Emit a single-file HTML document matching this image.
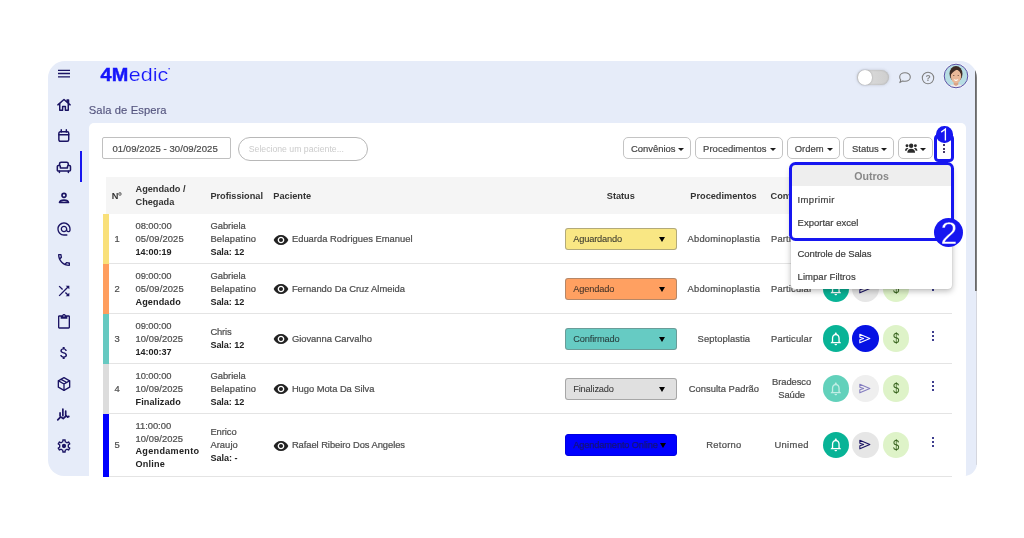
<!DOCTYPE html>
<html lang="pt-br">
<head>
<meta charset="utf-8">
<title>Sala de Espera</title>
<style>
*{box-sizing:border-box;margin:0;padding:0}
html,body{width:1024px;height:538px;overflow:hidden;background:#fff}
#root{position:absolute;left:0;top:0;width:1024px;height:538px;will-change:transform}
body{font-family:"Liberation Sans",sans-serif;font-size:9.4px;color:#4e4e4e;position:relative}
.abs{position:absolute}
.frame{position:absolute;left:48px;top:60.6px;width:928.5px;height:415.7px;background:#e6ecf9;border-radius:17px 17px 13px 16px;overflow:hidden}
.fin{position:absolute;left:0;top:.4px;width:100%;height:100%}
.panel{position:absolute;left:41px;top:62.3px;width:877px;height:380px;background:#fff;border-radius:5px 5px 0 0}
.sb{position:absolute}
.sb svg{display:block;width:100%;height:100%;fill:#1b1464}
.ind{position:absolute;left:32.2px;top:90px;width:2.2px;height:31px;background:#1616f0}
.title{position:absolute;left:40.8px;top:43px;font-size:11.2px;color:#55557f;line-height:13px;white-space:nowrap;letter-spacing:.1px;-webkit-text-stroke:.15px #55557f}
.scroll{position:absolute;left:927.4px;top:9.5px;width:1.4px;height:220.5px;background:linear-gradient(90deg,#5e5e5e,#8a8a8a)}
.scroll2{position:absolute;left:927.7px;top:230px;width:0.8px;height:174px;background:#d4d6de}
.inp{position:absolute;border:1px solid #c0c0c0;background:#fff;white-space:nowrap}
.btn{position:absolute;top:137px;height:22px;border:1px solid #c4c4c4;border-radius:5px;background:#fff;color:#454545;font-size:9.45px;line-height:21.2px;white-space:nowrap;-webkit-text-stroke:.2px #454545}
.btn span{position:absolute;top:0}
.caret{position:absolute;top:9.5px;width:0;height:0;border-left:3.05px solid transparent;border-right:3.05px solid transparent;border-top:3.1px solid #1c1c1c}
.thead{position:absolute;left:106.4px;top:177px;width:845.4px;height:36.6px;background:#f5f5f5}
.th{position:absolute;font-weight:700;color:#333;font-size:9.2px;line-height:13px;white-space:nowrap}
.row{position:absolute;left:103px;width:848.8px;border-bottom:1px solid #e4e4e4}
.strip{position:absolute;left:0;top:0;bottom:-1px;width:6.3px}
.c{position:absolute;line-height:13px;white-space:nowrap;color:#4e4e4e;-webkit-text-stroke:.22px #4e4e4e}
.c b{color:#222;font-size:9.1px;line-height:1;-webkit-text-stroke:0}
.sel{position:absolute;left:461.6px;width:112.6px;height:22.2px;border:1px solid rgba(110,110,110,.5);border-radius:3px;font-size:9.25px;line-height:20.6px;color:#3a3a3a;padding-left:7.6px;white-space:nowrap;letter-spacing:-0.15px}
.sel i{position:absolute;right:11px;top:8.2px;width:0;height:0;border-left:3.1px solid transparent;border-right:3.1px solid transparent;border-top:5.2px solid #000}
.rb{position:absolute;width:26.6px;height:26.6px;border-radius:50%}
.rb svg{position:absolute}
.kb{position:absolute;width:2.1px;height:2.1px;background:#1a1a7a;border-radius:35%}
.eye{position:absolute;left:170.3px;width:16px;height:16px;fill:#222}
.menu{position:absolute;left:791.3px;top:165.5px;width:160.6px;height:123.3px;background:#fff;border-radius:4px;box-shadow:0 2px 6px rgba(0,0,0,.28),0 0 1px rgba(0,0,0,.25);overflow:hidden}
.menu .hd{position:absolute;left:0;top:0;width:100%;height:20.6px;background:#eee;text-align:center;font-weight:700;font-size:10.6px;line-height:20.4px;color:#888}
.menu .it{position:absolute;left:6.3px;line-height:13px;color:#404040;font-size:9.5px;white-space:nowrap;-webkit-text-stroke:.2px #404040}
.hl{position:absolute;border:3.5px solid #1616f0}
.num{position:absolute;background:#1616f0;border-radius:50%;color:#fff;text-align:center}
</style>
</head>
<body>
<div id="root">
<div class="frame"><div class="fin">
<div class="ind"></div>
<div class="title">Sala de Espera</div>
<div class="panel"></div>
<div class="scroll"></div><div class="scroll2"></div>
<div class="sb" style="left:7.75px;top:5.00px;width:16px;height:16px"><svg viewBox="0 0 24 24"><path d="M3 5.600h18v1.900H3zM3 10.300h18v1.900H3zM3 15.300h18v1.900H3z"/></svg></div>
<div class="sb" style="left:7.75px;top:36.00px;width:16px;height:16px"><svg viewBox="0 0 24 24"><g fill="none" stroke="#1b1464" stroke-width="2.200" stroke-linejoin="round" stroke-linecap="round"><path d="M2.800 11.800 12 3.800l9.200 8"/><path d="M5.600 10.200v9.600h4.300v-5.400h4.200v5.400h4.300v-9.600"/><path d="M16.600 6.600V4.300h2.200v4.300"/></g></svg></div>
<div class="sb" style="left:8.95px;top:68.20px;width:13.6px;height:13.6px"><svg viewBox="0 0 24 24"><g fill="none" stroke="#1b1464" stroke-width="2.6"><rect x="3.300" y="4.800" width="17.400" height="16.900" rx="2.600"/><path d="M3.300 10.200h17.400M7.500 1.500v4M16.500 1.500v4" stroke-linecap="round"/></g></svg></div>
<div class="sb" style="left:7.85px;top:98.10px;width:15.8px;height:15.8px"><svg viewBox="0 0 24 24"><g fill="none" stroke="#1b1464" stroke-width="2.300" stroke-linejoin="round" stroke-linecap="round"><path d="M5.400 9.600V7.400c0-1.400 1-2.400 2.400-2.400h8.400c1.400 0 2.400 1 2.400 2.400v2.200"/><path d="M3.600 9.800h1.400c1 0 1.600.7 1.600 1.600v2.400h10.800v-2.400c0-.9.6-1.600 1.600-1.600h1.400c1 0 1.600.7 1.600 1.600v5.200c0 .9-.6 1.600-1.600 1.600H3.600c-1 0-1.600-.7-1.600-1.600v-5.200c0-.9.6-1.600 1.600-1.600z"/><path d="M5.200 18.600v1.800M18.800 18.600v1.800"/></g></svg></div>
<div class="sb" style="left:7.75px;top:129.00px;width:16px;height:16px"><svg viewBox="0 0 24 24"><g fill="none" stroke="#1b1464" stroke-width="2.500"><circle cx="12" cy="8" r="3"/><path d="M5.300 18.800c.4-2 3.300-3.500 6.700-3.500s6.300 1.500 6.700 3.500z" stroke-linejoin="round"/></g></svg></div>
<div class="sb" style="left:7.75px;top:160.00px;width:16px;height:16px"><svg viewBox="0 0 24 24"><path d="M12 2C6.480 2 2 6.480 2 12s4.480 10 10 10h5v-2h-5c-4.340 0-8-3.660-8-8s3.660-8 8-8 8 3.660 8 8v1.430c0 .79-.71 1.570-1.500 1.570s-1.500-.78-1.500-1.570V12c0-2.760-2.240-5-5-5s-5 2.240-5 5 2.240 5 5 5c1.380 0 2.640-.56 3.540-1.470.65.89 1.770 1.470 2.960 1.470 1.970 0 3.500-1.600 3.500-3.570V12c0-5.520-4.480-10-10-10zm0 13c-1.660 0-3-1.340-3-3s1.340-3 3-3 3 1.340 3 3-1.340 3-3 3z"/></svg></div>
<div class="sb" style="left:7.75px;top:191.00px;width:16px;height:16px"><svg viewBox="0 0 24 24"><path d="M6.540 5c.06.89.21 1.760.45 2.590l-1.200 1.200c-.41-1.200-.67-2.470-.76-3.790h1.510m9.860 12.020c.85.24 1.720.39 2.600.45v1.490c-1.320-.09-2.590-.35-3.800-.75l1.200-1.190M7.500 3H4c-.55 0-1 .45-1 1 0 9.390 7.610 17 17 17 .55 0 1-.45 1-1v-3.490c0-.55-.45-1-1-1-1.240 0-2.450-.2-3.570-.57-.1-.04-.21-.05-.31-.05-.26 0-.51.1-.71.29l-2.200 2.200c-2.830-1.450-5.150-3.760-6.590-6.590l2.200-2.200c.28-.28.36-.67.25-1.020C8.700 6.450 8.500 5.250 8.500 4c0-.55-.45-1-1-1z"/></svg></div>
<div class="sb" style="left:7.75px;top:222.00px;width:16px;height:16px"><svg viewBox="0 0 24 24"><path d="M10.590 9.170L5.410 4 4 5.410l5.170 5.170 1.420-1.410zM14.500 4l2.040 2.040L4 18.590 5.410 20 17.960 7.460 20 9.500V4h-5.500zm.33 9.410l-1.410 1.410 3.130 3.130L14.500 20H20v-5.500l-2.040 2.040-3.130-3.130z"/></svg></div>
<div class="sb" style="left:7.75px;top:253.00px;width:16px;height:16px"><svg viewBox="0 0 24 24"><path d="M19 2h-4.180C14.400.84 13.300 0 12 0S9.600.84 9.180 2H5c-1.100 0-2 .9-2 2v16c0 1.100.9 2 2 2h14c1.100 0 2-.9 2-2V4c0-1.100-.9-2-2-2zm-7 0c.55 0 1 .45 1 1s-.45 1-1 1-1-.45-1-1 .45-1 1-1zm7 18H5V4h2v3h10V4h2v16z"/></svg></div>
<div class="sb" style="left:7.75px;top:284.00px;width:16px;height:16px"><svg viewBox="0 0 24 24"><path d="M11.800 10.900c-2.270-.59-3-1.200-3-2.150 0-1.090 1.010-1.850 2.700-1.850 1.780 0 2.440.85 2.500 2.100h2.210c-.07-1.720-1.120-3.300-3.210-3.810V3h-3v2.160c-1.940.42-3.500 1.680-3.500 3.610 0 2.310 1.910 3.460 4.700 4.130 2.500.6 3 1.480 3 2.410 0 .69-.49 1.790-2.700 1.790-2.060 0-2.870-.92-2.980-2.100h-2.200c.12 2.190 1.760 3.420 3.680 3.830V21h3v-2.150c1.950-.37 3.500-1.500 3.500-3.550 0-2.840-2.430-3.810-4.700-4.400z"/></svg></div>
<div class="sb" style="left:7.75px;top:315.00px;width:16px;height:16px"><svg viewBox="0 0 24 24"><g fill="none" stroke="#1b1464" stroke-width="2" stroke-linejoin="round" stroke-linecap="round"><path d="M12 2.500 20.500 7.200v9.600L12 21.500 3.500 16.800V7.200z"/><path d="M3.800 7.400 12 12l8.200-4.600M12 12v9.300M7.600 5 16.200 9.700"/></g></svg></div>
<div class="sb" style="left:8.25px;top:346.50px;width:15px;height:15px"><svg viewBox="0 0 24 24"><g fill="none" stroke="#1b1464" stroke-width="2.700" stroke-linecap="round" stroke-linejoin="round"><path d="M6.500 9.500v5M11 3.500v10.500M15.500 6.500v6.500M2.800 20.500l4.700-4.700 4 2.700 5-4.500 2.200 2.300"/><circle cx="20.300" cy="15.300" r="1.600" fill="#1b1464" stroke="none"/></g></svg></div>
<div class="sb" style="left:7.75px;top:377.00px;width:16px;height:16px"><svg viewBox="0 0 24 24"><path d="M19.430 12.980c.04-.32.07-.64.07-.98 0-.34-.03-.66-.07-.98l2.110-1.650c.19-.15.24-.42.12-.64l-2-3.460c-.09-.16-.26-.25-.44-.25-.06 0-.12.010-.17.030l-2.490 1c-.52-.4-1.080-.73-1.690-.98l-.38-2.650C14.460 2.180 14.250 2 14 2h-4c-.25 0-.46.18-.49.42l-.38 2.650c-.61.25-1.170.59-1.690.98l-2.490-1c-.06-.02-.12-.03-.18-.03-.17 0-.34.09-.43.25l-2 3.460c-.13.22-.07.49.12.64l2.110 1.650c-.04.32-.07.65-.07.980 0 .33.03.66.07.98l-2.110 1.650c-.19.15-.24.42-.12.64l2 3.460c.09.16.26.25.44.25.06 0 .12-.010.17-.030l2.490-1c.52.4 1.080.73 1.690.98l.38 2.650c.03.24.24.42.49.42h4c.25 0 .46-.18.490-.42l.38-2.650c.61-.25 1.170-.59 1.690-.98l2.490 1c.06.02.12.03.18.03.17 0 .34-.09.43-.25l2-3.460c.12-.22.07-.49-.12-.64l-2.110-1.650zm-1.980-1.710c.04.31.05.52.05.73 0 .21-.02.43-.05.73l-.14 1.130.89.7 1.080.84-.7 1.210-1.270-.51-1.040-.42-.9.68c-.43.32-.84.56-1.250.73l-1.060.43-.16 1.130-.2 1.350h-1.400l-.19-1.350-.16-1.130-1.060-.43c-.43-.18-.83-.41-1.230-.71l-.91-.7-1.060.43-1.270.51-.7-1.210 1.080-.84.89-.7-.14-1.130c-.03-.31-.05-.54-.05-.74s.02-.43.05-.73l.14-1.130-.89-.7-1.080-.84.7-1.210 1.270.51 1.040.42.9-.68c.43-.32.84-.56 1.250-.73l1.060-.43.16-1.130.2-1.350h1.390l.19 1.350.16 1.130 1.060.43c.43.18.83.41 1.230.71l.91.7 1.060-.43 1.270-.51.7 1.210-1.070.85-.89.7.14 1.130z"/><circle cx="12" cy="12" r="3.200"/></svg></div>
<svg class="abs" style="left:52px;top:4px;width:74px;height:20px" viewBox="0 0 74 20"><g fill="#1616fa" font-family="Liberation Sans, sans-serif" font-size="17.900"><text x=".6" y="16.100" font-weight="700" textLength="27.600" lengthAdjust="spacingAndGlyphs" stroke="#1616fa" stroke-width=".45">4M</text><text x="28.800" y="16.100" textLength="39.400" lengthAdjust="spacingAndGlyphs" stroke="#e6ecf9" stroke-width=".18">edic</text><circle cx="69.100" cy="3.700" r=".75"/></g></svg>
<div class="abs" style="left:809.2px;top:8.600px;width:31.600px;height:15.600px;border-radius:8px;background:linear-gradient(90deg,#e0e0e0,#cecece);box-shadow:inset 0 0 2px rgba(0,0,0,.22),0 0 3px rgba(120,120,130,.35)"><div class="abs" style="left:.6px;top:.6px;width:14.400px;height:14.400px;border-radius:50%;background:#fff;box-shadow:0 0 2px rgba(0,0,0,.3)"></div></div>
<svg class="abs" style="left:850px;top:10px;width:14px;height:14px" viewBox="0 0 14 14"><path d="M7 1.700c3 0 5.300 1.900 5.300 4.300S10 10.300 7 10.300c-.8 0-1.500-.1-2.200-.4L1.800 11.600l1-2.600C2.100 8.200 1.700 7.200 1.700 6c0-2.400 2.300-4.300 5.300-4.300z" fill="none" stroke="#7c7c7c" stroke-width="1.050" stroke-linejoin="round"/></svg>
<svg class="abs" style="left:873.3px;top:9.800px;width:14px;height:14px" viewBox="0 0 14 14"><circle cx="7" cy="7" r="5.700" fill="none" stroke="#808080" stroke-width="1.050"/><text x="7" y="10" font-family="Liberation Sans, sans-serif" font-size="8.500" font-weight="700" text-anchor="middle" fill="#858585">?</text></svg>
<svg class="abs" style="left:894.5px;top:1.900px;width:26px;height:26px" viewBox="0 0 26 26"><defs><clipPath id="av"><circle cx="13" cy="13" r="11.400"/></clipPath></defs><circle cx="13" cy="13" r="12.700" fill="#fff" opacity=".8"/><circle cx="13" cy="13" r="11.800" fill="#b7dde3"/><g clip-path="url(#av)"><ellipse cx="13" cy="10.800" rx="6.500" ry="7.900" fill="#3d2b25"/><rect x="10.700" y="17.500" width="4.600" height="6" fill="#d9a386"/><path d="M3.500 26c.5-3 3-4.300 6.800-4.600l2.700 1.500 2.700-1.500c3.800.3 6.300 1.600 6.800 4.600z" fill="#efe9ea"/><ellipse cx="13" cy="13.300" rx="5.150" ry="6.900" fill="#e9b899"/><path d="M7.500 12C7.300 6.600 9.800 4.300 13.200 4.300c3.200 0 5.500 2.200 5.400 7.200-1.100-2.600-2.700-4.100-4.900-4.700-1.900 1-4.400 2.500-6.200 5.200z" fill="#3d2b25"/><circle cx="10.800" cy="12.500" r=".6" fill="#5a3d31"/><circle cx="15.200" cy="12.500" r=".6" fill="#5a3d31"/><path d="M10.600 15.900q2.400 1.500 4.800 0-.8 2.100-2.400 2.100t-2.400-2.100z" fill="#fff"/></g><circle cx="13" cy="13" r="11.800" fill="none" stroke="#5b50a6" stroke-width="1"/></svg>
</div></div>
<div class="inp" style="left:102.3px;top:137.3px;width:129.2px;height:21.7px;border-radius:2px;font-size:9.55px;line-height:21.3px;color:#4a4a4a;padding-left:9.1px;letter-spacing:.06px;-webkit-text-stroke:.2px #4a4a4a">01/09/2025 - 30/09/2025</div>
<div class="inp" style="left:238px;top:136.8px;width:130px;height:24px;border-radius:12px;font-size:8.7px;line-height:22px;color:#cbcbcb;padding-left:9.8px;border-color:#b8b8b8">Selecione um paciente...</div>
<div class="btn" style="left:622.9px;width:68.3px"><span style="left:7.0px;letter-spacing:0px">Convênios</span><i class="caret" style="left:54.0px"></i></div>
<div class="btn" style="left:694.7px;width:88.3px"><span style="left:7.4px;letter-spacing:0.04px">Procedimentos</span><i class="caret" style="left:74.0px"></i></div>
<div class="btn" style="left:786.6px;width:53.3px"><span style="left:7.2px;letter-spacing:0px">Ordem</span><i class="caret" style="left:39.2px"></i></div>
<div class="btn" style="left:843.2px;width:51.2px"><span style="left:7.8px;letter-spacing:0px">Status</span><i class="caret" style="left:36.5px"></i></div>
<div class="btn" style="left:897.9px;width:35.2px"><svg class="abs" style="left:6.400px;top:4.800px;width:12.400px;height:10px" viewBox="0 0 24.800 20"><g fill="#2b2b2b"><circle cx="12.400" cy="5.400" r="4.400"/><path d="M4.600 19.600c0-5 3.200-8 7.800-8s7.800 3 7.800 8z"/><circle cx="4" cy="5.600" r="2.900"/><circle cx="20.800" cy="5.600" r="2.900"/><path d="M0 15.600c0-3.600 1.600-5.800 4.400-5.800 1 0 1.900.3 2.600.8-2 1.300-3.300 3.100-3.600 5z"/><path d="M24.800 15.600c0-3.600-1.600-5.800-4.400-5.800-1 0-1.900.3-2.600.8 2 1.300 3.300 3.100 3.600 5z"/></g></svg><i class="caret" style="left:21px"></i></div>
<div class="kb" style="left:943.3px;top:143.8px;background:#24124a"></div>
<div class="kb" style="left:943.3px;top:147.5px;background:#24124a"></div>
<div class="kb" style="left:943.3px;top:151.3px;background:#24124a"></div>
<div class="thead"></div>
<div class="th" style="left:111.7px;top:189.6px;">Nº</div>
<div class="th" style="left:135.5px;top:182.7px;">Agendado /</div>
<div class="th" style="left:135.5px;top:195.7px;">Chegada</div>
<div class="th" style="left:210.4px;top:189.6px;">Profissional</div>
<div class="th" style="left:273.3px;top:189.6px;">Paciente</div>
<div class="th" style="left:570.8px;top:189.6px;width:100px;text-align:center">Status</div>
<div class="th" style="left:673.5px;top:189.6px;width:100px;text-align:center">Procedimentos</div>
<div class="th" style="left:770.5px;top:189.6px;">Convênio</div>
<div class="row" style="top:214.0px;height:49.6px"><div class="strip" style="background:#f9e07a"></div><div class="c" style="left:4.2px;top:17.9px;width:20px;text-align:center">1</div><div class="c" style="left:32.5px;top:4.9px;"><span style="letter-spacing:-0.056px">08:00:00</span><br><span style="letter-spacing:0.139px">05/09/2025</span><br><b style="letter-spacing:-0.061px">14:00:19</b></div><div class="c" style="left:107.4px;top:4.9px;"><span style="letter-spacing:-0.004px">Gabriela</span><br><span style="letter-spacing:0.153px">Belapatino</span><br><b style="letter-spacing:-0.072px">Sala: 12</b></div><svg class="eye" style="top:17.6px" viewBox="0 0 24 24"><path d="M12 4.500C7 4.500 2.730 7.610 1 12c1.730 4.390 6 7.500 11 7.500s9.270-3.110 11-7.500c-1.730-4.390-6-7.500-11-7.500zM12 17c-2.760 0-5-2.240-5-5s2.240-5 5-5 5 2.240 5 5-2.240 5-5 5zm0-8c-1.660 0-3 1.340-3 3s1.340 3 3 3 3-1.340 3-3-1.340-3-3-3z"/></svg><div class="c" style="left:188.9px;top:17.9px;"><span style="letter-spacing:0.012px">Eduarda Rodrigues Emanuel</span></div><div class="sel" style="top:13.5px;background:#f9e784;color:#3c3b30;-webkit-text-stroke:.08px #3c3b30">Aguardando<i></i></div><div class="c" style="left:570.9px;top:17.9px;width:100px;text-align:center"><span style="letter-spacing:0.236px">Abdominoplastia</span></div><div class="c" style="left:638.6px;top:17.9px;width:100px;text-align:center"><span style="letter-spacing:0.155px">Particular</span></div><div class="rb" style="left:719.5px;top:11.5px;background:#08b396"><svg viewBox="0 0 24 24" style="left:5.500px;top:5.500px;width:15.600px;height:15.600px;opacity:1"><path fill="#fff" d="M12 22c1.100 0 2-.9 2-2h-4c0 1.100.9 2 2 2zm6-6v-5c0-3.070-1.630-5.640-4.500-6.320V4c0-.83-.67-1.500-1.500-1.500s-1.500.67-1.500 1.500v.68C7.640 5.360 6 7.920 6 11v5l-2 2v1h16v-1l-2-2zm-2 1H8v-6c0-2.480 1.510-4.500 4-4.500s4 2.020 4 4.500v6z"/></svg></div><div class="rb" style="left:749.2px;top:11.5px;background:#e6e6e6"><svg viewBox="0 0 24 24" style="left:6.100px;top:6.800px;width:13px;height:13px"><path fill="none" stroke="#1b1464" stroke-width="2" stroke-linejoin="round" d="M3.400 4 21.800 12 3.400 20 3.400 14.200 10.500 12 3.400 9.800z"/></svg></div><div class="rb" style="left:779.7px;top:11.5px;background:#def3c8;color:#34601a;font-size:14.500px;line-height:27.200px;text-align:center"><span style="display:inline-block;transform:scaleX(.78)">$</span></div><div class="kb" style="left:828.9px;top:17.0px"></div><div class="kb" style="left:828.9px;top:20.9px"></div><div class="kb" style="left:828.9px;top:24.8px"></div></div>
<div class="row" style="top:263.6px;height:50.0px"><div class="strip" style="background:#ff9e5e"></div><div class="c" style="left:4.2px;top:18.1px;width:20px;text-align:center">2</div><div class="c" style="left:32.5px;top:5.1px;"><span style="letter-spacing:-0.07px">09:00:00</span><br><span style="letter-spacing:0.139px">05/09/2025</span><br><b style="letter-spacing:0.116px">Agendado</b></div><div class="c" style="left:107.4px;top:5.1px;"><span style="letter-spacing:-0.004px">Gabriela</span><br><span style="letter-spacing:0.153px">Belapatino</span><br><b style="letter-spacing:-0.072px">Sala: 12</b></div><svg class="eye" style="top:17.8px" viewBox="0 0 24 24"><path d="M12 4.500C7 4.500 2.730 7.610 1 12c1.730 4.390 6 7.500 11 7.500s9.270-3.110 11-7.500c-1.730-4.390-6-7.500-11-7.500zM12 17c-2.760 0-5-2.240-5-5s2.240-5 5-5 5 2.240 5 5-2.240 5-5 5zm0-8c-1.660 0-3 1.340-3 3s1.340 3 3 3 3-1.340 3-3-1.340-3-3-3z"/></svg><div class="c" style="left:188.9px;top:18.1px;"><span style="letter-spacing:0.001px">Fernando Da Cruz Almeida</span></div><div class="sel" style="top:14.3px;background:#ffa061;color:#46352a;-webkit-text-stroke:.08px #46352a">Agendado<i></i></div><div class="c" style="left:570.9px;top:18.1px;width:100px;text-align:center"><span style="letter-spacing:0.236px">Abdominoplastia</span></div><div class="c" style="left:638.6px;top:18.1px;width:100px;text-align:center"><span style="letter-spacing:0.155px">Particular</span></div><div class="rb" style="left:719.5px;top:11.7px;background:#08b396"><svg viewBox="0 0 24 24" style="left:5.500px;top:5.500px;width:15.600px;height:15.600px;opacity:1"><path fill="#fff" d="M12 22c1.100 0 2-.9 2-2h-4c0 1.100.9 2 2 2zm6-6v-5c0-3.070-1.630-5.640-4.500-6.320V4c0-.83-.67-1.500-1.500-1.500s-1.500.67-1.500 1.500v.68C7.640 5.360 6 7.920 6 11v5l-2 2v1h16v-1l-2-2zm-2 1H8v-6c0-2.480 1.510-4.500 4-4.500s4 2.020 4 4.500v6z"/></svg></div><div class="rb" style="left:749.2px;top:11.7px;background:#e6e6e6"><svg viewBox="0 0 24 24" style="left:6.100px;top:6.800px;width:13px;height:13px"><path fill="none" stroke="#1b1464" stroke-width="2" stroke-linejoin="round" d="M3.400 4 21.800 12 3.400 20 3.400 14.200 10.500 12 3.400 9.800z"/></svg></div><div class="rb" style="left:779.7px;top:11.7px;background:#def3c8;color:#34601a;font-size:14.500px;line-height:27.200px;text-align:center"><span style="display:inline-block;transform:scaleX(.78)">$</span></div><div class="kb" style="left:828.9px;top:17.2px"></div><div class="kb" style="left:828.9px;top:21.1px"></div><div class="kb" style="left:828.9px;top:25.0px"></div></div>
<div class="row" style="top:313.6px;height:50.0px"><div class="strip" style="background:#66c9c1"></div><div class="c" style="left:4.2px;top:18.1px;width:20px;text-align:center">3</div><div class="c" style="left:32.5px;top:5.1px;"><span style="letter-spacing:-0.07px">09:00:00</span><br><span style="letter-spacing:0.073px">10/09/2025</span><br><b style="letter-spacing:-0.061px">14:00:37</b></div><div class="c" style="left:107.4px;top:11.6px;"><span style="letter-spacing:-0.134px">Chris</span><br><b style="letter-spacing:-0.072px">Sala: 12</b></div><svg class="eye" style="top:17.8px" viewBox="0 0 24 24"><path d="M12 4.500C7 4.500 2.730 7.610 1 12c1.730 4.390 6 7.500 11 7.500s9.270-3.110 11-7.500c-1.730-4.390-6-7.500-11-7.500zM12 17c-2.760 0-5-2.240-5-5s2.240-5 5-5 5 2.240 5 5-2.240 5-5 5zm0-8c-1.660 0-3 1.340-3 3s1.340 3 3 3 3-1.340 3-3-1.340-3-3-3z"/></svg><div class="c" style="left:188.9px;top:18.1px;"><span style="letter-spacing:-0.017px">Giovanna Carvalho</span></div><div class="sel" style="top:14.3px;background:#66cbc3;color:#2a4240;-webkit-text-stroke:.08px #2a4240">Confirmado<i></i></div><div class="c" style="left:570.9px;top:18.1px;width:100px;text-align:center"><span style="letter-spacing:0.078px">Septoplastia</span></div><div class="c" style="left:638.6px;top:18.1px;width:100px;text-align:center"><span style="letter-spacing:0.155px">Particular</span></div><div class="rb" style="left:719.5px;top:11.7px;background:#08b396"><svg viewBox="0 0 24 24" style="left:5.500px;top:5.500px;width:15.600px;height:15.600px;opacity:1"><path fill="#fff" d="M12 22c1.100 0 2-.9 2-2h-4c0 1.100.9 2 2 2zm6-6v-5c0-3.070-1.630-5.640-4.500-6.320V4c0-.83-.67-1.500-1.500-1.500s-1.500.67-1.500 1.500v.68C7.640 5.360 6 7.920 6 11v5l-2 2v1h16v-1l-2-2zm-2 1H8v-6c0-2.480 1.510-4.500 4-4.500s4 2.020 4 4.500v6z"/></svg></div><div class="rb" style="left:749.2px;top:11.7px;background:#0612e4"><svg viewBox="0 0 24 24" style="left:6.100px;top:6.800px;width:13px;height:13px"><path fill="none" stroke="#ffffff" stroke-width="2" stroke-linejoin="round" d="M3.400 4 21.800 12 3.400 20 3.400 14.200 10.500 12 3.400 9.800z"/></svg></div><div class="rb" style="left:779.7px;top:11.7px;background:#def3c8;color:#34601a;font-size:14.500px;line-height:27.200px;text-align:center"><span style="display:inline-block;transform:scaleX(.78)">$</span></div><div class="kb" style="left:828.9px;top:17.2px"></div><div class="kb" style="left:828.9px;top:21.1px"></div><div class="kb" style="left:828.9px;top:25.0px"></div></div>
<div class="row" style="top:363.6px;height:50.0px"><div class="strip" style="background:#dcdcdc"></div><div class="c" style="left:4.2px;top:18.1px;width:20px;text-align:center">4</div><div class="c" style="left:32.5px;top:5.1px;"><span style="letter-spacing:-0.07px">10:00:00</span><br><span style="letter-spacing:0.073px">10/09/2025</span><br><b style="letter-spacing:0.09px">Finalizado</b></div><div class="c" style="left:107.4px;top:5.1px;"><span style="letter-spacing:-0.004px">Gabriela</span><br><span style="letter-spacing:0.153px">Belapatino</span><br><b style="letter-spacing:-0.072px">Sala: 12</b></div><svg class="eye" style="top:17.8px" viewBox="0 0 24 24"><path d="M12 4.500C7 4.500 2.730 7.610 1 12c1.730 4.390 6 7.500 11 7.500s9.270-3.110 11-7.500c-1.730-4.390-6-7.500-11-7.500zM12 17c-2.760 0-5-2.240-5-5s2.240-5 5-5 5 2.240 5 5-2.240 5-5 5zm0-8c-1.660 0-3 1.340-3 3s1.340 3 3 3 3-1.340 3-3-1.340-3-3-3z"/></svg><div class="c" style="left:188.9px;top:18.1px;"><span style="letter-spacing:-0.047px">Hugo Mota Da Silva</span></div><div class="sel" style="top:14.3px;background:#e0e0e0;color:#3a3a3a;-webkit-text-stroke:.08px #3a3a3a">Finalizado<i></i></div><div class="c" style="left:570.9px;top:18.1px;width:100px;text-align:center"><span style="letter-spacing:0.027px">Consulta Padrão</span></div><div class="c" style="left:638.6px;top:11.6px;width:100px;text-align:center"><span style="letter-spacing:-0.073px">Bradesco</span><br><span style="letter-spacing:-0.12px">Saúde</span></div><div class="rb" style="left:719.5px;top:11.7px;background:#62d1bb"><svg viewBox="0 0 24 24" style="left:5.500px;top:5.500px;width:15.600px;height:15.600px;opacity:.62"><path fill="#fff" d="M12 22c1.100 0 2-.9 2-2h-4c0 1.100.9 2 2 2zm6-6v-5c0-3.070-1.630-5.640-4.500-6.320V4c0-.83-.67-1.500-1.500-1.500s-1.500.67-1.500 1.500v.68C7.640 5.360 6 7.920 6 11v5l-2 2v1h16v-1l-2-2zm-2 1H8v-6c0-2.480 1.510-4.500 4-4.500s4 2.020 4 4.500v6z"/></svg></div><div class="rb" style="left:749.2px;top:11.7px;background:#efefef"><svg viewBox="0 0 24 24" style="left:6.100px;top:6.800px;width:13px;height:13px"><path fill="none" stroke="#857ec0" stroke-width="2" stroke-linejoin="round" d="M3.400 4 21.800 12 3.400 20 3.400 14.200 10.500 12 3.400 9.800z"/></svg></div><div class="rb" style="left:779.7px;top:11.7px;background:#def3c8;color:#34601a;font-size:14.500px;line-height:27.200px;text-align:center"><span style="display:inline-block;transform:scaleX(.78)">$</span></div><div class="kb" style="left:828.9px;top:17.2px"></div><div class="kb" style="left:828.9px;top:21.1px"></div><div class="kb" style="left:828.9px;top:25.0px"></div></div>
<div class="row" style="top:413.6px;height:63.5px"><div class="strip" style="background:#0000ff"></div><div class="c" style="left:4.2px;top:24.4px;width:20px;text-align:center">5</div><div class="c" style="left:32.5px;top:6.2px;line-height:12.8px"><span style="letter-spacing:-0.028px">11:00:00</span><br><span style="letter-spacing:0.073px">10/09/2025</span><br><b style="letter-spacing:0.293px">Agendamento</b><br><b style="letter-spacing:0.217px">Online</b></div><div class="c" style="left:107.4px;top:11.4px;"><span style="letter-spacing:-0.049px">Enrico</span><br><span style="letter-spacing:0.046px">Araujo</span><br><b style="letter-spacing:-0.035px">Sala: -</b></div><svg class="eye" style="top:24.1px" viewBox="0 0 24 24"><path d="M12 4.500C7 4.500 2.730 7.610 1 12c1.730 4.390 6 7.500 11 7.500s9.270-3.110 11-7.500c-1.730-4.390-6-7.500-11-7.500zM12 17c-2.760 0-5-2.240-5-5s2.240-5 5-5 5 2.240 5 5-2.240 5-5 5zm0-8c-1.660 0-3 1.340-3 3s1.340 3 3 3 3-1.340 3-3-1.340-3-3-3z"/></svg><div class="c" style="left:188.9px;top:24.4px;"><span style="letter-spacing:-0.062px">Rafael Ribeiro Dos Angeles</span></div><div class="sel" style="top:20.0px;background:#0000ff;color:#141478;-webkit-text-stroke:.08px #141478;border-color:#0000e0;letter-spacing:-.13px;-webkit-text-stroke:.25px #141478">Agendamento Online<i style="right:10.300px"></i></div><div class="c" style="left:570.9px;top:24.4px;width:100px;text-align:center"><span style="letter-spacing:0.276px">Retorno</span></div><div class="c" style="left:638.6px;top:24.4px;width:100px;text-align:center"><span style="letter-spacing:0.342px">Unimed</span></div><div class="rb" style="left:719.5px;top:18.0px;background:#08b396"><svg viewBox="0 0 24 24" style="left:5.500px;top:5.500px;width:15.600px;height:15.600px;opacity:1"><path fill="#fff" d="M12 22c1.100 0 2-.9 2-2h-4c0 1.100.9 2 2 2zm6-6v-5c0-3.070-1.630-5.640-4.500-6.320V4c0-.83-.67-1.500-1.500-1.500s-1.500.67-1.500 1.500v.68C7.640 5.360 6 7.920 6 11v5l-2 2v1h16v-1l-2-2zm-2 1H8v-6c0-2.480 1.510-4.500 4-4.500s4 2.020 4 4.500v6z"/></svg></div><div class="rb" style="left:749.2px;top:18.0px;background:#e6e6e6"><svg viewBox="0 0 24 24" style="left:6.100px;top:6.800px;width:13px;height:13px"><path fill="none" stroke="#1b1464" stroke-width="2" stroke-linejoin="round" d="M3.400 4 21.800 12 3.400 20 3.400 14.200 10.500 12 3.400 9.800z"/></svg></div><div class="rb" style="left:779.7px;top:18.0px;background:#def3c8;color:#34601a;font-size:14.500px;line-height:27.200px;text-align:center"><span style="display:inline-block;transform:scaleX(.78)">$</span></div><div class="kb" style="left:828.9px;top:23.6px"></div><div class="kb" style="left:828.9px;top:27.4px"></div><div class="kb" style="left:828.9px;top:31.4px"></div></div>
<div class="menu"><div class="hd">Outros</div><div class="it" style="top:27.200px;letter-spacing:.36px">Imprimir</div><div class="it" style="top:50px">Exportar excel</div><div class="abs" style="left:0;top:72.500px;width:100%;height:1px;background:#e5e5e5"></div><div class="it" style="top:81.700px;letter-spacing:-.1px">Controle de Salas</div><div class="it" style="top:104.500px;letter-spacing:.04px">Limpar Filtros</div></div>
<div class="hl" style="left:934.1px;top:133.6px;width:20px;height:28.500px;border-radius:4.500px;border-width:3.700px"></div>
<div class="hl" style="left:788.5px;top:161.900px;width:165.600px;height:79.300px;border-radius:6.500px;border-width:3.900px"></div>
<div class="num" style="left:936.3px;top:126.200px;width:16.400px;height:16.400px"><svg class="abs" style="left:0;top:0;width:16.400px;height:16.400px" viewBox="0 0 16.400 16.400"><path d="M5.200 6.100 9.400 3v11.500" fill="none" stroke="#fff" stroke-width="1.350" stroke-linejoin="miter"/></svg></div>
<div class="num" style="left:933.7px;top:217.6px;width:29.500px;height:29.500px;font-size:32px;line-height:31px"><span style="-webkit-text-stroke:.35px #1616f0;display:inline-block;transform:scaleX(.95)">2</span></div>
</div>
</body>
</html>
